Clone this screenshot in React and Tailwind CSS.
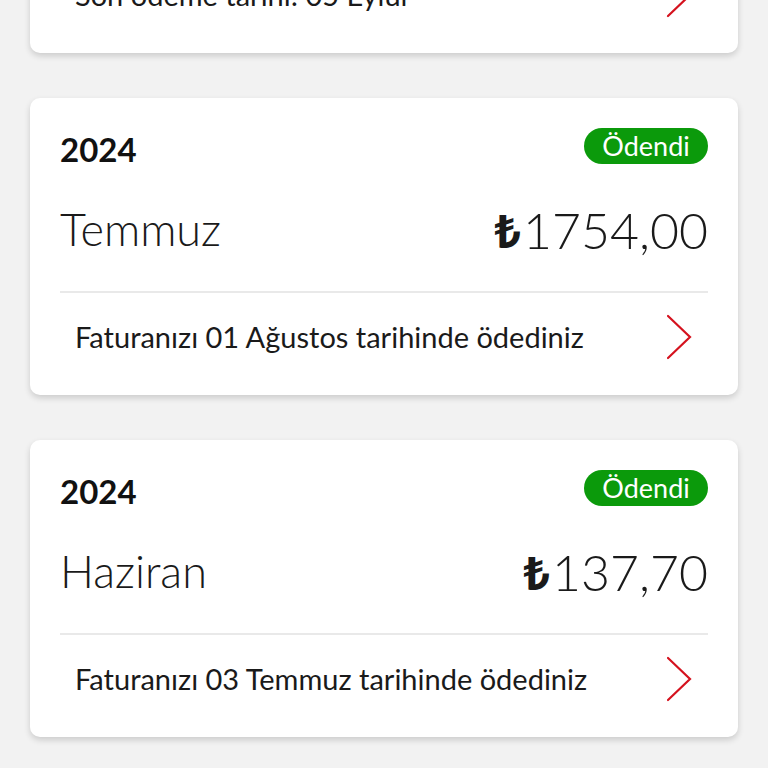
import React from 'react'

const bills = [
  { year: '2024', month: 'Ağustos', amount: '412,50', status: 'Ödendi', note: 'Son ödeme tarihi: 05 Eylül' },
  { year: '2024', month: 'Temmuz', amount: '1754,00', status: 'Ödendi', note: 'Faturanızı 01 Ağustos tarihinde ödediniz' },
  { year: '2024', month: 'Haziran', amount: '137,70', status: 'Ödendi', note: 'Faturanızı 03 Temmuz tarihinde ödediniz' },
]

function Chevron() {
  return (
    <svg width="28" height="46" viewBox="0 0 28 46" fill="none" className="shrink-0">
      <path d="M3 2 L25 23 L3 44" stroke="#d5121e" strokeWidth="2.2" strokeLinecap="round" strokeLinejoin="miter" />
    </svg>
  )
}

function BillCard({ bill, className = '' }) {
  return (
    <div className={'h-[297px] shrink-0 bg-white rounded-[10px] shadow-[0_3px_6px_rgba(0,0,0,0.16)] px-[30px] pt-[30px] ' + className}>
      <div className="h-[36px] flex items-center justify-between">
        <span className="pt-[8px] text-[33px] font-bold text-[#111]">{bill.year}</span>
        <span className="h-[36px] w-[124px] rounded-full bg-[#0b9a0b] text-white text-[27px] font-normal flex items-center justify-center">
          {bill.status}
        </span>
      </div>
      <div className="mt-[36px] h-[60px] flex items-center justify-between">
        <span className="text-[45px] font-light text-[#1a1a1a]">{bill.month}</span>
        <span className="text-[50px] font-light text-[#1a1a1a] flex items-center">
          <span className="font-bold font-['Noto_Sans','DejaVu_Sans',sans-serif] text-[46px] mr-[2px]">₺</span>
          {bill.amount}
        </span>
      </div>
      <div className="mt-[31px] h-[2px] bg-[#e9e9e9]" />
      <div className="h-[88px] px-[15px] flex items-center justify-between">
        <span className="text-[29px] text-[#1a1a1a]">{bill.note}</span>
        <Chevron />
      </div>
    </div>
  )
}

export default function App() {
  return (
    <div className="h-[768px] overflow-hidden bg-[#f2f2f2] px-[30px] font-['Lato','Noto_Sans',sans-serif]">
      <div className="flex flex-col gap-[45px]">
        <BillCard bill={bills[0]} className="mt-[-244px]" />
        <BillCard bill={bills[1]} />
        <BillCard bill={bills[2]} />
      </div>
    </div>
  )
}
